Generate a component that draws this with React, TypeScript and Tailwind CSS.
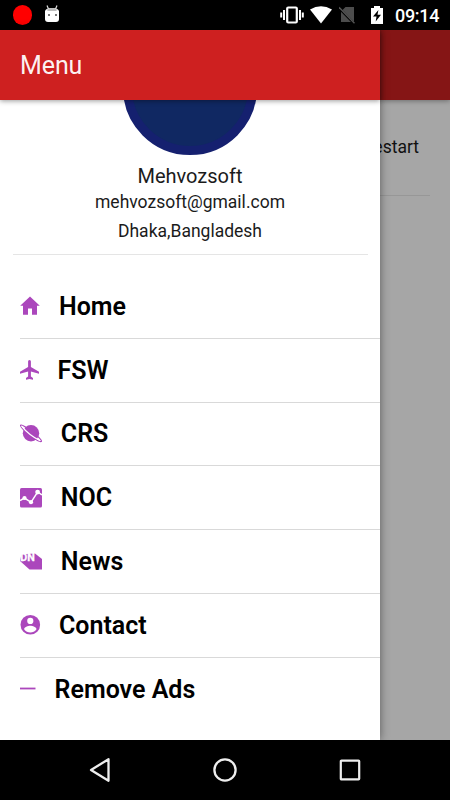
import React from "react";

function HomeIcon() {
  return (
    <svg width="20" height="20" viewBox="0 0 20 20" className="shrink-0" fill="#ab47bc">
      <path d="M10 0.6 0.2 9.8H3V18.8H8V12.4H12V18.8H17V9.8H19.8Z" />
    </svg>
  );
}

function PlaneIcon() {
  return (
    <svg width="19" height="20" viewBox="0 0 19 20" className="shrink-0" fill="#ab47bc">
      <path d="M9.5 0C8.6 0 8.1.8 8.1 1.7V7L0 11.8V13.8L8.1 11.5V16.5L6 18.1V19.8L9.5 19L13 19.8V18.1L10.9 16.5V11.5L19 13.8V11.8L10.9 7V1.7C10.9.8 10.4 0 9.5 0Z" />
    </svg>
  );
}

function PlanetIcon() {
  return (
    <svg width="23" height="20" viewBox="0 0 23 20" className="shrink-0">
      <circle cx="11" cy="9.3" r="8.2" fill="#ab47bc" />
      <g transform="rotate(38 11 9.3)">
        <ellipse cx="11" cy="9.3" rx="13.2" ry="2.1" fill="none" stroke="#ab47bc" strokeWidth="1.2" />
        <path d="M-0.8 9.5Q11 12.2 22.8 9.5" fill="none" stroke="white" strokeWidth="1.3" />
      </g>
    </svg>
  );
}

function AnalyticsIcon() {
  return (
    <svg width="22" height="20" viewBox="0 0 22 20" className="shrink-0">
      <rect width="22" height="19.6" rx="1.5" fill="#ab47bc" />
      <path d="M0 12.5 4.5 10 11 14.3 17.6 4 22 7" stroke="white" strokeWidth="1.5" fill="none" />
      <circle cx="4.5" cy="10" r="2.1" fill="white" />
      <circle cx="11" cy="14.2" r="2.1" fill="white" />
      <circle cx="17.6" cy="4.1" r="2.4" fill="white" />
    </svg>
  );
}

function DesignerNewsIcon() {
  return (
    <svg width="22" height="20" viewBox="0 0 22 20" className="shrink-0">
      <path d="M0 9 1.5 2.2 15 1.5 22 7V17.6H9.5Z" fill="#ab47bc" />
      <text x="0.3" y="9" textLength="14.5" lengthAdjust="spacingAndGlyphs" fill="white" stroke="white" strokeWidth="0.3" fontFamily="Roboto" fontWeight="700" fontSize="11">
        DN
      </text>
    </svg>
  );
}

function ContactIcon() {
  return (
    <svg width="21" height="20" viewBox="0 0 21 20" className="shrink-0">
      <circle cx="10.3" cy="9.8" r="9.8" fill="#ab47bc" />
      <circle cx="10.3" cy="5.9" r="3.1" fill="white" />
      <path d="M4.1 14.2C4.1 12.2 8 10.8 10.3 10.8S16.5 12.2 16.5 14.2C13.5 18.5 7.1 18.5 4.1 14.2Z" fill="white" />
    </svg>
  );
}

function MinusIcon() {
  return (
    <svg width="16" height="20" viewBox="0 0 16 20" className="shrink-0">
      <path d="M0 9.5H15.5" stroke="#ab47bc" strokeWidth="1.8" />
    </svg>
  );
}

const items = [
  { label: "Home", icon: <HomeIcon />, gap: "ml-[19px]" },
  { label: "FSW", icon: <PlaneIcon />, gap: "ml-[18.6px]" },
  { label: "CRS", icon: <PlanetIcon />, gap: "ml-[17.8px]" },
  { label: "NOC", icon: <AnalyticsIcon />, gap: "ml-[18.8px]" },
  { label: "News", icon: <DesignerNewsIcon />, gap: "ml-[18.8px]" },
  { label: "Contact", icon: <ContactIcon />, gap: "ml-[18px]" },
  { label: "Remove Ads", icon: <MinusIcon />, gap: "ml-[18.6px]" },
];

function StatusBar() {
  return (
    <div className="flex h-[30px] items-center bg-black text-white">
      <span className="ml-[13px] h-5 w-[19px] rounded-full bg-[#ff0000]" />
      <svg width="16" height="20" viewBox="0 0 16 20" className="ml-3">
        <path d="M1 6Q2 3 8 3T15 6V14Q15 17 12 17H4Q1 17 1 14Z" fill="white" />
        <path d="M2.8 5Q4 3 8 3T13.2 5L12 6H4Z" fill="#bbb" />
        <path d="M4.5 4 3 0.5M11.5 4 13 0.5" stroke="#ddd" strokeWidth="1.2" />
        <rect x="4" y="9" width="2" height="2" fill="#777" />
        <rect x="11" y="9" width="2" height="2" fill="#777" />
      </svg>
      <svg width="24" height="20" viewBox="0 0 24 20" className="ml-[220px]" fill="none" stroke="white">
        <rect x="7.2" y="2.5" width="9.6" height="15" rx="1" strokeWidth="2.2" />
        <path d="M4 5V15M20 5V15M1.2 7.5V12.5M22.8 7.5V12.5" strokeWidth="2" />
      </svg>
      <svg width="22" height="18" viewBox="0 0 22 18" className="ml-[6px]">
        <path d="M0 3.5Q11-3.1 22 3.5L11 17.5Z" fill="white" />
      </svg>
      <svg width="17" height="19" viewBox="0 0 17 19" className="ml-[7px]">
        <path d="M6.5 1H15V16H2V5.5Z" fill="#4d4d4d" />
        <path d="M0 2 15.5 18" stroke="black" strokeWidth="2.5" />
        <path d="M0 1.3 15.5 17.3" stroke="#555" strokeWidth="1.4" />
      </svg>
      <svg width="14" height="20" viewBox="0 0 14 20" className="ml-[14px]">
        <path d="M4 1H10V3H13V19H1V3H4Z" fill="white" />
        <path d="M8.4 5 3 11.5H6.5L5.7 16.5 11 9.8H7.5Z" fill="black" />
      </svg>
      <span className="ml-[11px] mt-[1px] whitespace-nowrap text-[18px] font-medium leading-5 tracking-[-0.3px]">09:14</span>
    </div>
  );
}

function Drawer() {
  return (
    <aside className="relative z-10 flex w-[380px] shrink-0 flex-col bg-white shadow-[0_0_9px_rgba(0,0,0,0.45)]">
      <header className="relative z-10 flex h-[70px] shrink-0 items-center bg-[#ce2020] pl-5 pt-[2px] text-[25px] tracking-[-0.1px] text-white/95 shadow-[0_1px_5px_rgba(0,0,0,0.4)]">
        Menu
      </header>
      <section className="ml-[13px] mr-3 flex h-[155px] shrink-0 flex-col items-center border-b border-[#e5e5e5] pr-[1px] text-[#1b1b1b]">
        <div className="flex h-[55px] w-[134px] shrink-0 items-end overflow-hidden">
          <div className="h-[134px] w-[134px] shrink-0 rounded-full border-[9px] border-[#15206f] bg-[#102862]" />
        </div>
        <p className="mt-[7px] text-[20px] leading-7">Mehvozsoft</p>
        <p className="text-[17.5px] leading-[25px]">mehvozsoft@gmail.com</p>
        <p className="mt-[2px] text-[17.5px] leading-7">Dhaka,Bangladesh</p>
      </section>
      <nav className="mt-[20px] pl-5">
        {items.map((item) => (
          <div key={item.label} className="flex h-[63.8px] items-center border-b border-[#d9d9d9] text-[25px] font-semibold text-black last:border-transparent">
            {item.icon}
            <span className={`mt-[0.5px] ${item.gap}`}>{item.label}</span>
          </div>
        ))}
      </nav>
    </aside>
  );
}

function NavigationBar() {
  return (
    <div className="relative z-20 flex h-[60px] items-center bg-black pl-[89px]">
      <svg width="22" height="26" viewBox="0 0 22 26" fill="none" stroke="#eee" strokeWidth="2.3" strokeLinejoin="round">
        <path d="M19.5 2.2V23.8L2 13Z" />
      </svg>
      <svg width="24" height="24" viewBox="0 0 24 24" className="ml-[102px]" fill="none" stroke="#eee" strokeWidth="2.3">
        <circle cx="12" cy="12" r="10.6" />
      </svg>
      <svg width="22" height="22" viewBox="0 0 22 22" className="ml-[102px]" fill="none" stroke="#eee" strokeWidth="2.2">
        <rect x="1.8" y="1.6" width="18.4" height="18.8" rx="0.7" />
      </svg>
    </div>
  );
}

export default function App() {
  return (
    <div className="flex h-[800px] w-[450px] flex-col overflow-hidden font-['Roboto',sans-serif]">
      <StatusBar />
      <div className="flex h-[710px]">
        <Drawer />
        <main className="w-[70px] shrink-0 bg-[#a6a6a6]">
          <div className="h-[70px] bg-[#851515] shadow-[0_1px_5px_rgba(0,0,0,0.35)]" />
          <div className="mr-5 flex h-[96px] items-center justify-end border-b border-[#979797]">
            <span className="mr-[11px] whitespace-nowrap text-[17.5px] text-[#111]">estart</span>
          </div>
        </main>
      </div>
      <NavigationBar />
    </div>
  );
}
